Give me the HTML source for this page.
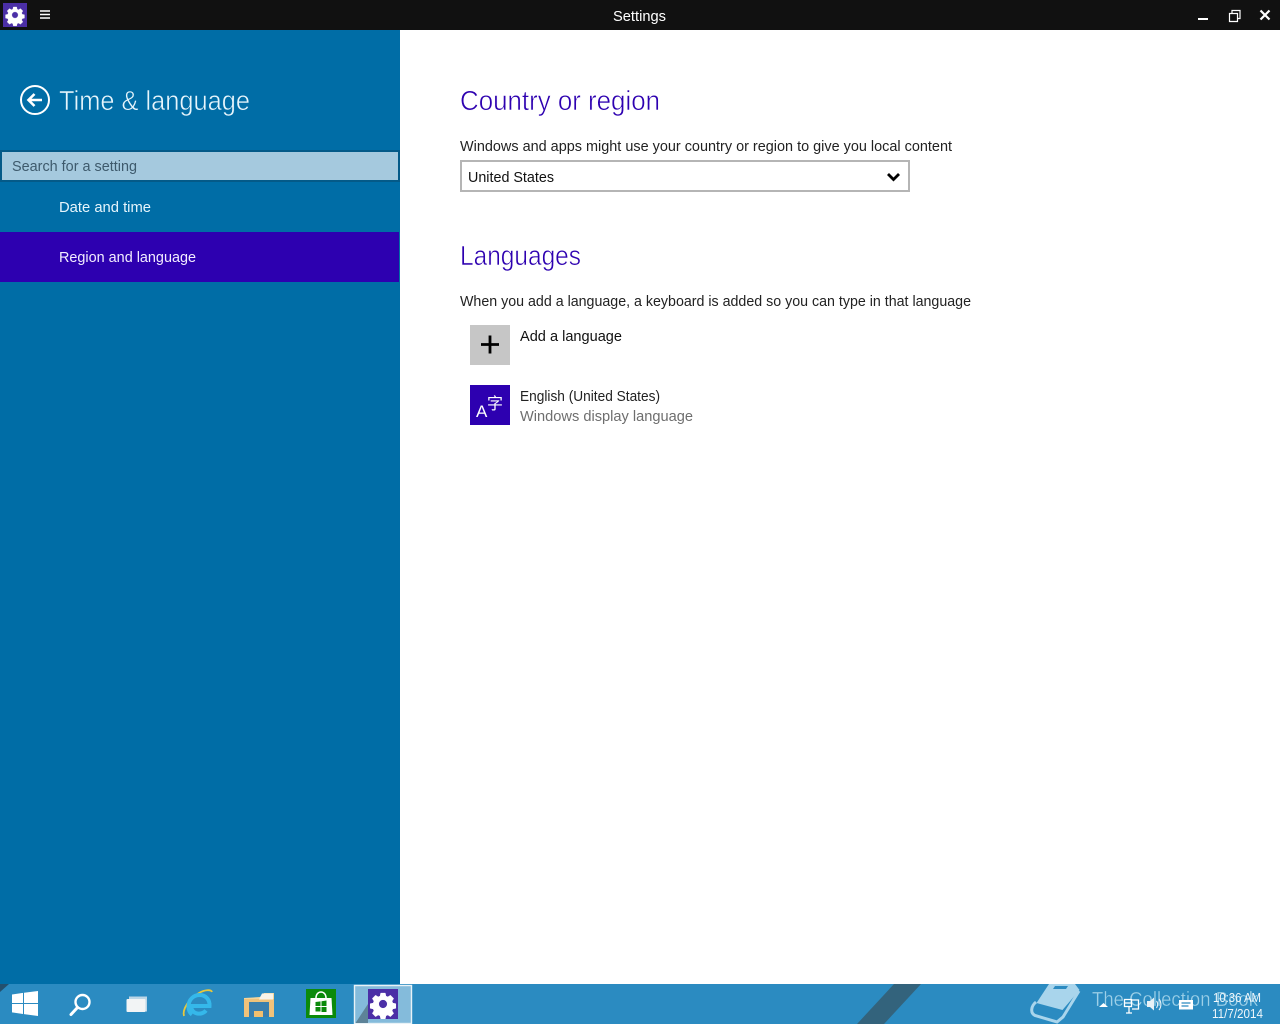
<!DOCTYPE html>
<html lang="en"><head><meta charset="utf-8"><title>Settings</title>
<style>
html,body{margin:0;padding:0;width:1280px;height:1024px;overflow:hidden;background:#fff}
svg{display:block}
text{font-family:"Liberation Sans","Noto Sans CJK SC",sans-serif}
</style></head><body>
<svg width="1280" height="1024" viewBox="0 0 1280 1024" xmlns="http://www.w3.org/2000/svg">
<defs>
<g id="gear"><path fill="#fff" stroke="#fff" stroke-width=".5" stroke-linejoin="round" fill-rule="evenodd" d="M-2.2-10.500h4.400l.6 2.900 1.900.8 2.500-1.600 3.100 3.100-1.600 2.500.8 1.900 2.900.6v4.400l-2.900.6-.8 1.900 1.600 2.500-3.100 3.100-2.500-1.600-1.900.8-.6 2.900h-4.400l-.6-2.900-1.900-.8-2.500 1.600-3.100-3.100 1.600-2.500-.8-1.900-2.900-.6v-4.400l2.900-.6.8-1.900-1.600-2.500 3.100-3.100 2.500 1.600 1.900-.8zM0-4.200a4.200 4.200 0 1 0 0 8.400a4.200 4.200 0 1 0 0-8.400z"/></g>
</defs>

<!-- window -->
<rect width="1280" height="1024" fill="#fff"/>
<rect width="1280" height="30" fill="#111"/>
<rect x="3" y="3" width="24" height="24" fill="#4b2fa6"/>
<use href="#gear" transform="translate(15 15) scale(.76)"/>
<path d="M40 11h10M40 14.500h10M40 18h10" stroke="#fff" stroke-width="1.500"/>
<text x="613" y="21" font-size="14.500" fill="#fff" textLength="53" lengthAdjust="spacingAndGlyphs">Settings</text>
<rect x="1198" y="18" width="10" height="2" fill="#fff"/>
<path d="M1229.500 13.500h8v8h-8zM1232 13.500v-3h8v8h-2.500" fill="none" stroke="#fff" stroke-width="1.200"/>
<path d="M1260.500 10.500l9 9M1269.500 10.500l-9 9" stroke="#fff" stroke-width="2.200"/>

<!-- sidebar -->
<rect y="30" width="400" height="954" fill="#006da6"/>
<circle cx="35" cy="100" r="14" fill="none" stroke="#fff" stroke-width="2"/>
<path d="M42 100H29M34.500 94l-6 6 6 6" fill="none" stroke="#fff" stroke-width="2.600"/>
<text x="59" y="110" font-size="27.500" fill="#e6f5fc" stroke="#006da6" stroke-width=".55" textLength="191" lengthAdjust="spacingAndGlyphs">Time &amp; language</text>

<rect x="1" y="151" width="398" height="30" fill="#a5c9de" stroke="#045a88" stroke-width="2"/>
<text x="12" y="171" font-size="15" fill="#3e5a6c" textLength="125" lengthAdjust="spacingAndGlyphs">Search for a setting</text>
<text x="59" y="212" font-size="15" fill="#e6f5fc" textLength="92" lengthAdjust="spacingAndGlyphs">Date and time</text>
<rect y="232" width="399" height="50" fill="#2d00b0"/>
<text x="59" y="262" font-size="15" fill="#f2ecff" textLength="137" lengthAdjust="spacingAndGlyphs">Region and language</text>

<!-- content -->
<text x="460" y="110" font-size="27.500" fill="#2d00b0" stroke="#fff" stroke-width=".55" textLength="200" lengthAdjust="spacingAndGlyphs">Country or region</text>
<text x="460" y="151" font-size="15" fill="#222" textLength="492" lengthAdjust="spacingAndGlyphs">Windows and apps might use your country or region to give you local content</text>
<rect x="461" y="161" width="448" height="30" fill="#fff" stroke="#b5b5b5" stroke-width="2"/>
<text x="468" y="182" font-size="15" fill="#111" textLength="86" lengthAdjust="spacingAndGlyphs">United States</text>
<path d="M888 174l5.500 5.500 5.500-5.500" fill="none" stroke="#000" stroke-width="2.800"/>

<text x="460" y="265" font-size="27.500" fill="#2d00b0" stroke="#fff" stroke-width=".55" textLength="121" lengthAdjust="spacingAndGlyphs">Languages</text>
<text x="460" y="306" font-size="15" fill="#222" textLength="511" lengthAdjust="spacingAndGlyphs">When you add a language, a keyboard is added so you can type in that language</text>

<rect x="470" y="325" width="40" height="40" fill="#c6c6c6"/>
<path d="M490 335.500v18M481 344.500h18" stroke="#000" stroke-width="2.800"/>
<text x="520" y="341" font-size="15" fill="#111" textLength="102" lengthAdjust="spacingAndGlyphs">Add a language</text>

<rect x="470" y="385" width="40" height="40" fill="#2d00b0"/>
<text x="476" y="417" font-size="17" fill="#fff">A</text>
<text x="487" y="409" font-size="16" fill="#fff">字</text>
<text x="520" y="401" font-size="15" fill="#222" textLength="140" lengthAdjust="spacingAndGlyphs">English (United States)</text>
<text x="520" y="421" font-size="15" fill="#6e6e6e" textLength="173" lengthAdjust="spacingAndGlyphs">Windows display language</text>

<!-- taskbar -->
<rect y="984" width="1280" height="40" fill="#2b8bc1"/>
<path d="M0 984h9l-9 8z" fill="#23506e"/>
<path d="M894 984h27l-37 40h-27z" fill="#33637c"/>

<!-- start -->
<path d="M12 994.500l11-1.600v10.100H12zM24 992.700L38 991v12H24zM12 1004h11v10l-11-1.600zM24 1004H38V1016l-14-1.900z" fill="#fff"/>
<!-- search -->
<circle cx="82.500" cy="1002" r="7" fill="none" stroke="#fff" stroke-width="2.400"/>
<path d="M77.500 1007.500l-6.500 7" stroke="#fff" stroke-width="3" stroke-linecap="round"/>
<!-- task view -->
<path d="M129 999v-2.500h18v15h-2z" fill="#bcd6e6"/>
<rect x="126.500" y="999" width="19" height="13" rx="1" fill="#f2f4f5"/>
<!-- IE -->
<path d="M184 1016c-2-6 5-18 15-23 5-3 12-4 13-1" fill="none" stroke="#e8c83c" stroke-width="1.800"/>
<path d="M206 1010.500c-4 5-14.500 4.500-15-4.500h18.500c.5-6.500-4-11-9.800-11-6 0-11.200 4.500-11.200 11.500 0 4 1.500 6.500 3.500 8" fill="none" stroke="#35b8ea" stroke-width="4"/>
<!-- explorer -->
<path d="M244 998l16-1 4-4h10v7h-30z" fill="#f3d59b"/>
<rect x="244" y="999" width="30" height="18" fill="#f0c27a"/>
<path d="M262 993.500h11v6h-14z" fill="#f7f4ea"/>
<rect x="249" y="1002" width="20" height="15" fill="#3a7fae"/>
<rect x="254" y="1011" width="9" height="6" fill="#f2bf6e"/>
<!-- store -->
<rect x="306" y="989" width="30" height="29" fill="#0b8a0b"/>
<path d="M310.500 998h21l1 17h-23z" fill="#fff"/>
<path d="M316 998c0-8 10-8 10 0" fill="none" stroke="#fff" stroke-width="1.600"/>
<path d="M315.500 1002l5-.6v4.600h-5zM321.500 1001.200l5-.7v5.500h-5zM315.500 1007h5v4.500h-5zM321.500 1007h5v5h-5z" fill="#0b8a0b"/>
<!-- settings active -->
<rect x="354.500" y="985.500" width="57" height="38" fill="#ffffff" fill-opacity=".42" stroke="#e8f2f7" stroke-width="1.400"/>
<path d="M355.500 1023L368 1004v19z" fill="#5d8398"/>
<rect x="368" y="989" width="30" height="30" fill="#4b2fa6"/>
<use href="#gear" transform="translate(383 1004) scale(1.030)"/>

<!-- wallpaper book -->
<path d="M1049 984h26l4.500 6-17 20-26-7z" fill="#a9d5ec"/>
<path d="M1036 1002c-5 4-6 11-1 13.500l22 6.500 6-5 16-26" fill="none" stroke="#a9d5ec" stroke-width="3"/>
<path d="M1036 1006l24 6.500-1.500 4-23-6z" fill="#2b8bc1"/>
<path d="M1055 986h13l-2 3h-13z" fill="#2b8bc1"/>
<text x="1092" y="1006" font-size="20" fill="#9dd0e8" stroke="#2b8bc1" stroke-width=".3" textLength="166" lengthAdjust="spacingAndGlyphs">The Collection Book</text>

<!-- tray -->
<path d="M1099 1007l4.500-4 4.500 4z" fill="#fff"/>
<path d="M1124.500 999.500h7v7h-7zM1132 1000h6.500v9h-6.500M1129 1006.500v6.500M1126 1013h6M1124 1003h7" fill="none" stroke="#fff" stroke-width="1.300"/>
<path d="M1147 1001h3l4-3.500v13l-4-3.500h-3z" fill="#e8f1f6"/>
<path d="M1156.500 1001c1.500 2 1.500 4.500 0 7M1159 999c2.500 3 2.500 8 0 11" fill="none" stroke="#e8f1f6" stroke-width="1.100"/>
<rect x="1179" y="1000" width="14" height="9.500" fill="#fff"/>
<path d="M1181.500 1003h9M1181.500 1006h7" stroke="#2b8bc1" stroke-width="1.200"/>
<text x="1213" y="1002" font-size="12.500" fill="#f0f7fb" textLength="48" lengthAdjust="spacingAndGlyphs">10:36 AM</text>
<text x="1212" y="1018" font-size="12.500" fill="#f0f7fb" textLength="51" lengthAdjust="spacingAndGlyphs">11/7/2014</text>
</svg>
</body></html>
